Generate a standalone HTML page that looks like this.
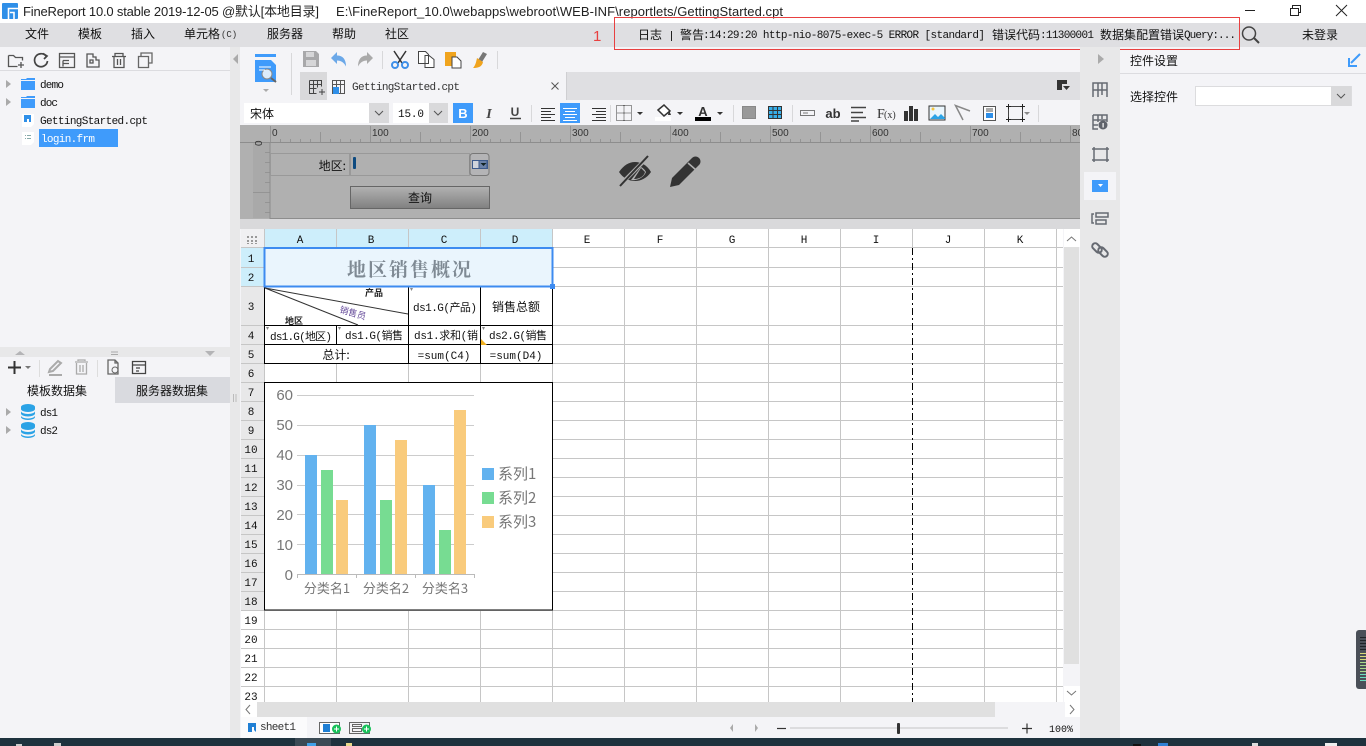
<!DOCTYPE html>
<html lang="zh">
<head>
<meta charset="utf-8">
<title>FineReport</title>
<style>
html,body{margin:0;padding:0;background:#f4f4f7;overflow:hidden;width:1366px;height:746px}
svg{display:block}
text{font-family:"Liberation Sans","WenQuanYi Zen Hei","Noto Sans CJK SC",sans-serif;font-size:12px;fill:#111}
.m{font-family:"Liberation Mono","WenQuanYi Zen Hei",monospace;font-size:11px}
.c{font-family:"WenQuanYi Zen Hei","Noto Sans CJK SC",sans-serif;font-size:12px}
.t{font-size:13px;fill:#222}
.s{fill:none;stroke:#555;stroke-width:1.3}
.g{fill:none;stroke:#666a72;stroke-width:2}
.mid{text-anchor:middle}
.end{text-anchor:end}
.ax{fill:#777;font-size:15px}
.cat{fill:#777;font-size:13px;font-family:"Noto Sans CJK SC","Liberation Sans",sans-serif}
.leg{fill:#777;font-size:15px;font-family:"Noto Sans CJK SC","Liberation Sans",sans-serif}
.r{font-family:"Liberation Mono",monospace;font-size:11px;text-anchor:middle}
</style>
</head>
<body>
<svg width="1366" height="746" viewBox="0 0 1366 746" xmlns="http://www.w3.org/2000/svg">
<defs>
<pattern id="rt" patternUnits="userSpaceOnUse" x="270" y="126" width="100" height="17">
<path d="M.5 0V17M10.5 13V17M20.5 13V17M30.5 13V17M40.5 13V17M50.5 6V17M60.5 13V17M70.5 13V17M80.5 13V17M90.5 13V17" stroke="#949494" fill="none"/>
</pattern>
<pattern id="rl" patternUnits="userSpaceOnUse" x="253" y="143" width="17" height="100">
<path d="M12 9.500H17M12 19.500H17M12 29.500H17M12 39.500H17M0 49.500H17M12 59.500H17M12 69.500H17M12 79.500H17M12 89.500H17" stroke="#949494" fill="none"/>
</pattern>
<linearGradient id="btn" x1="0" y1="0" x2="0" y2="1"><stop offset="0" stop-color="#b2b2b2"/><stop offset="1" stop-color="#808080"/></linearGradient>
</defs>

<!-- base -->
<rect width="1366" height="746" fill="#f4f4f7"/>
<rect width="1366" height="23" fill="#fff"/>
<rect y="23" width="1366" height="24" fill="#dfdfe2"/>

<!-- title bar -->
<rect x="2" y="3" width="16" height="16" rx="1" fill="#2f8fe8"/>
<path d="M8.500 19V8.500H18M10 12.500H14V19" stroke="#fff" stroke-width="1.600" fill="none"/>
<text x="23" y="16" class="t" textLength="296">FineReport 10.0 stable 2019-12-05 @默认[本地目录]</text>
<text x="336" y="16" class="t" textLength="447">E:\FineReport_10.0\webapps\webroot\WEB-INF\reportlets/GettingStarted.cpt</text>
<path d="M1245 10.500H1255" stroke="#222" fill="none"/>
<path d="M1290.500 8.500h8v7h-8zM1292.500 8V5.500h8v7h-2" stroke="#222" fill="none"/>
<path d="M1336 5L1347 16M1347 5L1336 16" stroke="#222" fill="none"/>

<!-- menu -->
<text x="25" y="38" class="c">文件</text>
<text x="78" y="38" class="c">模板</text>
<text x="131" y="38" class="c">插入</text>
<text x="184" y="38" class="c">单元格</text>
<text x="221" y="37" class="m" style="font-size:9px;fill:#333">(C)</text>
<text x="267" y="38" class="c">服务器</text>
<text x="332" y="38" class="c">帮助</text>
<text x="385" y="38" class="c">社区</text>
<text x="593" y="41" style="font-size:15px;fill:#e84040">1</text>

<!-- log -->
<text x="638" y="39" class="c">日志</text>
<path d="M671.500 31V41" stroke="#222"/>
<text x="680" y="39" class="c">警告</text>
<text x="703" y="38" class="m" textLength="282">:14:29:20 http-nio-8075-exec-5 ERROR [standard]</text>
<text x="992" y="39" class="c">错误代码</text>
<text x="1040" y="38" class="m" textLength="54">:11300001</text>
<text x="1100" y="39" class="c">数据集配置错误</text>
<text x="1184" y="38" class="m" textLength="52">Query:...</text>
<circle cx="1249" cy="33.500" r="6.500" fill="none" stroke="#444" stroke-width="1.500"/>
<path d="M1254 38L1259 43" stroke="#444" stroke-width="2"/>
<text x="1302" y="39" class="c">未登录</text>
<rect x="614.500" y="17.500" width="625" height="32" fill="none" stroke="#e84040"/>

<!-- left panel toolbar -->
<path d="M8.500 55.500h5l2 2h7v3M8.500 55.500v11h9M18 65h6M21 62v6" class="s"/>
<path d="M46 56a6.500 6.500 0 1 0 1.500 5M43 53.500l4 2.500-3 3" class="s" style="stroke:#444;stroke-width:1.700"/>
<path d="M59.500 53.500h15v14h-15zM59.500 57h15M63 60.500h6M63 63.500h6M63 60.500v6" class="s"/>
<path d="M87 54h6v3h3v3h3v7h-12zM90 60h3v3h-3z" class="s"/>
<path d="M112 56.500h14M115 56v-2.500h8V56M114 57v10.500h10V57M117.500 59v6M120.500 59v6" class="s"/>
<path d="M138.500 56.500h10v11h-10zM141 56v-3h11v10h-3" class="s" style="stroke:#666"/>
<rect y="70" width="230" height="1" fill="#dcdce0"/>

<!-- left tree -->
<path d="M6 80l5 4-5 4zM6 98l5 4-5 4z" fill="#aaa"/>
<path d="M21 79h5l1-1h8v2h-14zM21 81h14v9h-14zM21 97h5l1-1h8v2h-14zM21 99h14v9h-14z" fill="#3f9bfb"/>
<text x="40" y="88" class="m" textLength="24">demo</text>
<text x="40" y="106" class="m" textLength="18">doc</text>
<path d="M22 114h12v10l-3 3h-9z" fill="#fff"/>
<path d="M24 115h7v7h-2v-3h-2v3h-3z" fill="#2f8fe8"/>
<text x="40" y="124" class="m" textLength="108">GettingStarted.cpt</text>
<path d="M22 132h12v10l-3 3h-9z" fill="#fff"/>
<path d="M25 135.500h1M27 135.500h4M25 138.500h1M27 138.500h4" stroke="#8aa"/>
<rect x="39" y="129" width="79" height="18" fill="#3f9bfb"/>
<text x="41" y="142" class="m" textLength="54" style="fill:#fff">login.frm</text>

<!-- left split -->
<rect y="347" width="230" height="10" fill="#e8e8e9"/>
<path d="M15 355l5-4 5 4zM205 351h10l-5 5z" fill="#b4b4b6"/>
<path d="M111 352h7M111 354.500h7" stroke="#aaa"/>
<path d="M8 367.500h13M14.500 361v13" stroke="#333" stroke-width="2"/>
<path d="M25 366h6l-3 3z" fill="#777"/>
<path d="M39.500 360v17M97.500 360v17" stroke="#ddd"/>
<path d="M49 372l1-3 8-8 3 2-8 8zM49 375h13" class="s" style="stroke:#aaa;stroke-width:2"/>
<path d="M75 362h13M78 361v-1h7v1M76.500 363v11h10v-11M80 365v7M83 365v7" class="s" style="stroke:#aaa"/>
<path d="M108 360h7l3 3v11h-10zM115 360v3h3" class="s" style="stroke:#666"/>
<circle cx="115" cy="370" r="3" fill="none" stroke="#666"/>
<path d="M132.500 361.500h13v12h-13zM132.500 365h13M136 368h4M136 371h3" class="s" style="stroke:#444"/>
<rect y="377" width="115" height="26" fill="#f4f4f7"/>
<rect x="115" y="377" width="115" height="26" fill="#d9dadf"/>
<text x="57" y="395" class="c mid">模板数据集</text>
<text x="172" y="395" class="c mid">服务器数据集</text>
<path d="M6 408l5 4-5 4zM6 426l5 4-5 4z" fill="#aaa"/>
<g fill="#2ba3e6">
<path d="M21 407a7 3 0 0 1 14 0v2a7 3 0 0 1-14 0zM21 411a7 3 0 0 0 14 0v2.500a7 3 0 0 1-14 0zM21 415.500a7 3 0 0 0 14 0v1.500a7 3 0 0 1-14 0z"/>
<path d="M21 425a7 3 0 0 1 14 0v2a7 3 0 0 1-14 0zM21 429a7 3 0 0 0 14 0v2.500a7 3 0 0 1-14 0zM21 433.500a7 3 0 0 0 14 0v1.500a7 3 0 0 1-14 0z"/>
</g>
<text x="40" y="416" class="m" textLength="18">ds1</text>
<text x="40" y="434" class="m" textLength="18">ds2</text>

<!-- vertical splitter -->
<rect x="230" y="47" width="10" height="691" fill="#e8e8e9"/>
<path d="M238 54l-5 5 5 5z" fill="#aaa"/>
<path d="M233.500 394v8M236 394v8" stroke="#bbb"/>

<!-- tab row (starts at x=300) -->
<rect x="300" y="72" width="780" height="28" fill="#dfdfe2"/>
<rect x="300" y="72" width="266" height="28" fill="#f4f4f7"/>
<rect x="300" y="72" width="27" height="28" fill="#d9d9db"/>
<rect x="566" y="72" width="1" height="28" fill="#cfcfd2"/>
<path d="M309.500 80.500h12v6M309.500 80.500v13h7M309.500 84.500h12M309.500 88.500h7M313.500 80.500v13M317.500 80.500v7M319 92h6M322 89v6" fill="none" stroke="#444"/>
<path d="M332.500 80.500h12v13h-12zM332.500 84.500h12M336.500 81v13M340.500 81v13" fill="none" stroke="#555"/>
<rect x="333" y="87" width="6" height="7" fill="#2f8fe8"/>
<text x="352" y="90" class="m" textLength="108" style="fill:#333">GettingStarted.cpt</text>
<path d="M551.500 82.500l7 7M558.500 82.500l-7 7" stroke="#555" fill="none"/>
<path d="M1057 80h10v4h-5v6h-5z" fill="#333"/>
<path d="M1063 86h7l-3.500 4z" fill="#333"/>

<!-- toolbar row 1 -->
<rect x="255" y="54" width="21" height="3" fill="#3f9bfb"/>
<path d="M255 60h16l5 5v17h-21z" fill="#3f9bfb"/>
<circle cx="267" cy="74" r="5" fill="#dcecfb" stroke="#888"/>
<path d="M259 67h12M259 70h6" stroke="#fff"/>
<path d="M271 78l5 4" stroke="#666" stroke-width="2"/>
<path d="M263 89h6l-3 3z" fill="#aaa"/>
<path d="M291.500 53V95" stroke="#d8d8da"/>
<path d="M303 51h13l3 3v13h-16z" fill="#a8a8aa"/>
<path d="M306 52h8v5h-8zM306 60h10v6h-10z" fill="#d6d6d8"/>
<path d="M331 58l6-6v3.500c6 0 9 4 9 11-2-4-5-6-9-6v3.500z" fill="#6ba8e8"/>
<path d="M373 58l-6-6v3.500c-6 0-9 4-9 11 2-4 5-6 9-6v3.500z" fill="#aaa"/>
<path d="M382.500 51V69M497.500 51V69" stroke="#d8d8da"/>
<path d="M394 51l8 12M406 51l-8 12" stroke="#333" stroke-width="1.500"/>
<circle cx="395" cy="65" r="3" fill="none" stroke="#3f8fe8" stroke-width="2"/>
<circle cx="405" cy="65" r="3" fill="none" stroke="#3f8fe8" stroke-width="2"/>
<path d="M418.500 51.500h7l3 3v9h-10zM425 55.500h4l5 4v8h-9z" fill="#fff" stroke="#444"/>
<path d="M445 52h11v14h-11z" fill="#f0a41e"/>
<path d="M452 57h5l4 4v7h-9z" fill="#fff" stroke="#444"/>
<path d="M483 52l4 2-5 8-4-2z" fill="#777"/>
<path d="M477 58l6 4c-1 5-5 6-10 6 2-2 3-5 4-10z" fill="#f0a41e"/>

<!-- format row -->
<rect x="240" y="100" width="840" height="25" fill="#f4f4f7"/>
<rect x="244" y="103" width="125" height="20" fill="#fff"/>
<rect x="369" y="103" width="20" height="20" fill="#d9d9db"/>
<path d="M375 111l4 4 4-4" fill="none" stroke="#555"/>
<text x="250" y="118" class="c">宋体</text>
<rect x="393" y="103" width="36" height="20" fill="#fff"/>
<rect x="429" y="103" width="19" height="20" fill="#d9d9db"/>
<path d="M434 111l4 4 4-4" fill="none" stroke="#555"/>
<text x="398" y="117" class="m" textLength="26">15.0</text>
<rect x="453" y="103" width="20" height="20" fill="#3f9bfb"/>
<text x="463" y="118" class="mid" style="font-weight:bold;font-size:13px;fill:#fff">B</text>
<text x="489" y="118" class="mid" style="font-family:'Liberation Serif',serif;font-weight:bold;font-style:italic;font-size:14px;fill:#444">I</text>
<text x="515" y="116" class="mid" style="font-weight:bold;font-size:12px;fill:#444">U</text>
<path d="M510 118.500h11" stroke="#444" stroke-width="1.500"/>
<path d="M531.500 105V122M733.500 105V122M792.500 105V122M610.500 105V122M1038.500 105V122" stroke="#d8d8da"/>
<path d="M541 108.500h14M541 111.500h10M541 114.500h14M541 117.500h10M541 120.500h14" stroke="#333" fill="none"/>
<rect x="560" y="103" width="20" height="20" fill="#3f9bfb"/>
<path d="M563 108.500h14M565 111.500h10M563 114.500h14M565 117.500h10M563 120.500h14" stroke="#fff" fill="none"/>
<path d="M592 108.500h14M596 111.500h10M592 114.500h14M596 117.500h10M592 120.500h14" stroke="#333" fill="none"/>
<path d="M616.500 105.500h15v15h-15zM624 105.500v15M616.500 113h15" fill="none" stroke="#333" stroke-dasharray="1 1"/>
<path d="M637 112h6l-3 3z" fill="#333"/>
<path d="M658 110l6-5 6 6-6 5z" fill="#fff" stroke="#333" stroke-width="1.500"/>
<path d="M669 110l2 5h-3z" fill="#333"/>
<rect x="655" y="117" width="16" height="4" fill="#fff"/>
<path d="M677 112h6l-3 3z" fill="#333"/>
<text x="703" y="116" class="mid" style="font-weight:bold;font-size:13px;fill:#333">A</text>
<rect x="695" y="117" width="16" height="4" fill="#000"/>
<path d="M717 112h6l-3 3z" fill="#333"/>
<rect x="742" y="106" width="14" height="13" fill="#999"/>
<path d="M742.500 106.500h13v12h-13z" fill="none" stroke="#888"/>
<rect x="768" y="106" width="14" height="13" fill="#37aee8"/>
<path d="M768.500 106.500h13v12h-13zM768.500 110.500h13M768.500 114.500h13M773 106v13M777.500 106v13" fill="none" stroke="#333"/>
<path d="M800.500 110.500h14v5h-14zM803 113h5" fill="none" stroke="#777"/>
<text x="833" y="118" class="mid" style="font-weight:bold;font-size:13px;fill:#333">ab</text>
<path d="M851 107.500h15M851 112.500h12M851 117.500h15M851 121h8" stroke="#444" stroke-width="1.500" fill="none"/>
<text x="877" y="118" style="font-family:'Liberation Serif',serif;font-size:14px;fill:#333">F</text>
<text x="884" y="118" style="font-family:'Liberation Serif',serif;font-size:10px;fill:#333">(x)</text>
<path d="M904 111h4v10h-4zM909 106h4v15h-4zM914 109h4v12h-4z" fill="#333"/>
<rect x="929" y="106" width="16" height="14" fill="#eaf6fd" stroke="#333"/>
<path d="M930 119l5-5 3 3 3-3 4 4v1z" fill="#2ba3e6"/>
<circle cx="933" cy="109" r="1.500" fill="#f5c542"/>
<path d="M970 111L955.500 105.500L963 120" fill="none" stroke="#888" stroke-width="1.500"/>
<rect x="983.500" y="106.500" width="12" height="14" fill="#fff" stroke="#555"/>
<path d="M986 109h7M986 111h7" stroke="#555"/>
<rect x="986" y="113" width="7" height="5" fill="#2f8fe8"/>
<rect x="1008.500" y="106.500" width="14" height="13" fill="none" stroke="#444"/>
<path d="M1006 106.500h5M1020 106.500h5M1006 119.500h5M1020 119.500h5M1008.500 104v5M1022.500 104v5M1008.500 117v5M1022.500 117v5" stroke="#222"/>
<path d="M1024 112h6l-3 3z" fill="#888"/>

<!-- form area -->
<rect x="240" y="125" width="840" height="94" fill="#b0b0b0"/>
<rect x="253" y="143" width="17" height="75" fill="#a9a9a9"/>
<rect x="270" y="126" width="810" height="17" fill="url(#rt)"/>
<rect x="253" y="143" width="17" height="75" fill="url(#rl)"/>
<path d="M240 142.500H1080" stroke="#8d8d8d"/>
<path d="M270 142V218.500H1080" stroke="#8d8d8d" fill="none"/>
<text x="272" y="136" style="font-size:10px;fill:#333">0</text>
<text x="372" y="136" style="font-size:10px;fill:#333">100</text>
<text x="472" y="136" style="font-size:10px;fill:#333">200</text>
<text x="572" y="136" style="font-size:10px;fill:#333">300</text>
<text x="672" y="136" style="font-size:10px;fill:#333">400</text>
<text x="772" y="136" style="font-size:10px;fill:#333">500</text>
<text x="872" y="136" style="font-size:10px;fill:#333">600</text>
<text x="972" y="136" style="font-size:10px;fill:#333">700</text>
<text x="1072" y="136" style="font-size:10px;fill:#333">800</text>
<text transform="translate(262,146) rotate(-90)" style="font-size:10px;fill:#333">0</text>
<rect x="270.500" y="153.500" width="79" height="22" fill="none" stroke="#999"/>
<text x="346" y="170" class="c end">地区:</text>
<rect x="350.500" y="153.500" width="119" height="22" fill="none" stroke="#999"/>
<rect x="353" y="157" width="3" height="12" rx="1" fill="#0d4a80"/>
<rect x="470" y="153.500" width="19" height="22" rx="3" fill="#b4b4b6" stroke="#777"/>
<rect x="472.500" y="160.500" width="15" height="8" fill="#d0d4dc" stroke="#3c5a8c"/>
<rect x="479" y="160.500" width="8" height="8" fill="#6b82a8" stroke="#3c5a8c"/>
<path d="M480.500 163h6l-3 3z" fill="#122"/>
<rect x="350.500" y="186.500" width="139" height="22" fill="url(#btn)" stroke="#666"/>
<text x="420" y="202" class="c mid">查询</text>
<!-- eye -->
<path d="M619 172c5-7 10-10 16-10 6 0 12 3 16 10-4 6-10 9-16 9-6 0-12-3-16-9z" fill="#333"/>
<path d="M631 180c7 1 13-3 15-8-1-2-3-4-5-5z" fill="#b0b0b0"/>
<path d="M634 179c6 0 10-3 11-7l-4-4" fill="#333"/>
<path d="M620 185L648 157" stroke="#b0b0b0" stroke-width="4"/>
<path d="M620 186L648 156" stroke="#333" stroke-width="2"/>
<!-- pencil -->
<path d="M670 187l2-9 20-20c2-2 5-2 7 0 2 2 2 5 0 7l-20 20z" fill="#333"/>
<path d="M688 163l8 7" stroke="#b0b0b0" stroke-width="1.500"/>

<!-- strip -->
<rect x="240" y="219" width="840" height="10" fill="#d9d9db"/>

<!-- sheet -->
<rect x="241" y="229" width="824" height="473" fill="#fff"/>
<rect x="241" y="229" width="23" height="18" fill="#f0f0f2"/>
<path d="M247 236h2v2h-2zM251 236h2v2h-2zM255 236h2v2h-2zM247 240h2v2h-2zM251 240h2v2h-2zM255 240h2v2h-2zM247 244h2v-1h-2zM251 244h2v-1h-2zM255 244h2v-1h-2z" fill="#999"/>
<rect x="265" y="229" width="288" height="18" fill="#cdeefb"/>
<rect x="241" y="248" width="23" height="38" fill="#cdeefb"/>
<rect x="241" y="287" width="23" height="323" fill="#e8e8e9"/>
<g shape-rendering="crispEdges" fill="none" stroke="#c6c6c6">
<path d="M264.500 229V702M336.500 229V702M408.500 229V702M480.500 229V702M552.500 229V702M624.500 229V702M696.500 229V702M768.500 229V702M840.500 229V702M984.500 229V702M1056.500 229V702"/>
<path d="M241 247.500H1063M241 267.500H1063M241 286.500H1063M241 325.500H1063M241 344.500H1063M241 363.500H1063M241 382.500H1063M241 401.500H1063M241 420.500H1063M241 439.500H1063M241 458.500H1063M241 477.500H1063M241 496.500H1063M241 515.500H1063M241 534.500H1063M241 553.500H1063M241 572.500H1063M241 591.500H1063M241 610.500H1063M241 629.500H1063M241 648.500H1063M241 667.500H1063M241 686.500H1063"/>
<path d="M912.500 229V247"/>
</g>
<path d="M912.500 248V702" stroke="#000" stroke-dasharray="7 3 2 3" shape-rendering="crispEdges"/>

<!-- headers -->
<text x="300" y="243" class="m mid">A</text><text x="371" y="243" class="m mid">B</text><text x="444" y="243" class="m mid">C</text><text x="515" y="243" class="m mid">D</text><text x="587" y="243" class="m mid">E</text><text x="660" y="243" class="m mid">F</text><text x="732" y="243" class="m mid">G</text><text x="804" y="243" class="m mid">H</text><text x="876" y="243" class="m mid">I</text><text x="948" y="243" class="m mid">J</text><text x="1020" y="243" class="m mid">K</text>
<text x="251" y="262" class="r">1</text>
<text x="251" y="281" class="r">2</text>
<text x="251" y="310" class="r">3</text>
<text x="251" y="339" class="r">4</text>
<text x="251" y="358" class="r">5</text>
<text x="251" y="377" class="r">6</text>
<text x="251" y="396" class="r">7</text>
<text x="251" y="415" class="r">8</text>
<text x="251" y="434" class="r">9</text>
<text x="251" y="453" class="r">10</text>
<text x="251" y="472" class="r">11</text>
<text x="251" y="491" class="r">12</text>
<text x="251" y="510" class="r">13</text>
<text x="251" y="529" class="r">14</text>
<text x="251" y="548" class="r">15</text>
<text x="251" y="567" class="r">16</text>
<text x="251" y="586" class="r">17</text>
<text x="251" y="605" class="r">18</text>
<text x="251" y="624" class="r">19</text>
<text x="251" y="643" class="r">20</text>
<text x="251" y="662" class="r">21</text>
<text x="251" y="681" class="r">22</text>
<text x="251" y="700" class="r">23</text>

<!-- report cells -->
<rect x="265" y="249" width="287" height="37" fill="#eaf5fd"/>
<text x="410" y="276" class="mid" style="font-family:'Noto Serif CJK SC',serif;font-weight:700;font-size:19px;letter-spacing:2px;fill:#7f8a94">地区销售概况</text>
<rect x="265" y="287" width="287" height="76" fill="#fff"/>
<g shape-rendering="crispEdges" fill="none" stroke="#000">
<path d="M264.500 287V363.500H552.500V287M264.500 325.500H552.500M264.500 344.500H552.500M336.500 325V344M408.500 287V363M480.500 287V363"/>
</g>
<path d="M265 288L408 314M265 288L358 325" stroke="#333" fill="none" stroke-width="1"/>
<text x="374" y="296" class="mid" style="font-size:9px;font-weight:bold;fill:#222">产品</text>
<text transform="translate(352,316) rotate(16)" class="mid" style="font-size:9px;fill:#654a9a">销售员</text>
<text x="294" y="324" class="mid" style="font-size:9px;font-weight:bold;fill:#222">地区</text>
<path d="M266 327h3l-1.500 3zM338 327h3l-1.500 3zM410 288h3l-1.500 3zM482 327h3l-1.500 3z" fill="#888"/>
<path d="M481 345v-6l6 6z" fill="#f0b020"/>
<text x="270" y="340" class="m" textLength="62">ds1.G(地区)</text>
<text x="345" y="339" class="m" textLength="58">ds1.G(销售</text>
<text x="414" y="339" class="m" textLength="64">ds1.求和(销</text>
<text x="489" y="339" class="m" textLength="58">ds2.G(销售</text>
<text x="413" y="311" class="m" textLength="64">ds1.G(产品)</text>
<text x="516" y="311" class="c mid">销售总额</text>
<text x="336" y="359" class="c mid">总计:</text>
<text x="444" y="359" class="m mid">=sum(C4)</text>
<text x="516" y="359" class="m mid">=sum(D4)</text>
<rect x="264.500" y="248" width="288" height="38.500" fill="none" stroke="#3d8bf0" stroke-width="2"/>
<rect x="550" y="284" width="5" height="5" fill="#3d8bf0"/>

<!-- chart -->
<rect x="264.500" y="382.500" width="288" height="227.500" fill="#fff" stroke="#000" shape-rendering="crispEdges"/>
<g shape-rendering="crispEdges" stroke="#ccc">
<path d="M297 395.500H474M297 425.500H474M297 455.500H474M297 485.500H474M297 514.500H474M297 544.500H474" fill="none"/>
<path d="M297 574.500H474M297.500 574V578M356.500 574V578M415.500 574V578M474.500 574V578" fill="none" stroke="#bbb"/>
</g>
<text x="293" y="400" class="ax end">60</text>
<text x="293" y="430" class="ax end">50</text>
<text x="293" y="460" class="ax end">40</text>
<text x="293" y="490" class="ax end">30</text>
<text x="293" y="520" class="ax end">20</text>
<text x="293" y="550" class="ax end">10</text>
<text x="293" y="580" class="ax end">0</text>
<g fill="#62b2ef">
<rect x="305" y="455" width="12" height="119"/><rect x="364" y="425" width="12" height="149"/><rect x="423" y="485" width="12" height="89"/>
<rect x="482" y="468" width="12" height="12"/>
</g>
<g fill="#77dc92">
<rect x="321" y="470" width="12" height="104"/><rect x="380" y="500" width="12" height="74"/><rect x="439" y="530" width="12" height="44"/>
<rect x="482" y="492" width="12" height="12"/>
</g>
<g fill="#f9cb7c">
<rect x="336" y="500" width="12" height="74"/><rect x="395" y="440" width="12" height="134"/><rect x="454" y="410" width="12" height="164"/>
<rect x="482" y="516" width="12" height="12"/>
</g>
<text x="327" y="593" class="cat mid">分类名1</text>
<text x="386" y="593" class="cat mid">分类名2</text>
<text x="445" y="593" class="cat mid">分类名3</text>
<text x="498" y="479" class="leg">系列1</text>
<text x="498" y="503" class="leg">系列2</text>
<text x="498" y="527" class="leg">系列3</text>

<!-- v scrollbar -->
<rect x="1063" y="229" width="17" height="473" fill="#f4f4f7"/>
<rect x="1064" y="247" width="15" height="417" fill="#e0e0e0"/>
<rect x="1064" y="229" width="16" height="18" fill="#fff"/>
<rect x="1064" y="686" width="16" height="16" fill="#fff"/>
<path d="M1067 241l4.500-4 4.500 4M1067 691l4.500 4 4.500-4" fill="none" stroke="#777"/>
<!-- h scrollbar -->
<rect x="241" y="702" width="839" height="15" fill="#f4f4f7"/>
<rect x="257" y="702" width="738" height="15" fill="#e0e0e0"/>
<rect x="241" y="702" width="16" height="15" fill="#fff"/>
<rect x="1065" y="702" width="15" height="15" fill="#fff"/>
<path d="M250 705l-4 4.500 4 4.500M1070 705l4 4.500-4 4.500" fill="none" stroke="#777"/>

<!-- sheet tabs -->
<rect x="240" y="717" width="840" height="21" fill="#f4f4f7"/>
<rect x="241" y="717" width="66" height="21" fill="#fbfbfc"/>
<path d="M248 723h8v9l-2-2v-3h-2v5h-4z" fill="#1f7fd4"/>
<text x="260" y="730" class="m" textLength="36" style="fill:#333">sheet1</text>
<path d="M319.500 722.500h20v11h-20z" fill="#fff" stroke="#666"/>
<rect x="323" y="724" width="7" height="8" fill="#1f7fd4"/>
<circle cx="336.500" cy="729" r="4.500" fill="#18c15a"/>
<path d="M334 729h5M336.500 726.500v5" stroke="#fff"/>
<path d="M349.500 722.500h20v11h-20zM352.500 724.500h9v2h-9zM352.500 728.500h9v3h-9z" fill="none" stroke="#666"/>
<circle cx="366.500" cy="729" r="4.500" fill="#18c15a"/>
<path d="M364 729h5M366.500 726.500v5" stroke="#fff"/>
<path d="M733 724l-3 4 3 4zM755 724l3 4-3 4z" fill="#aaa"/>
<path d="M777 728.500h9" stroke="#333" stroke-width="1.200"/>
<rect x="790" y="727" width="218" height="2" fill="#dcdcde"/>
<rect x="897" y="723" width="3" height="11" rx="1" fill="#333"/>
<path d="M1022 728.500h10M1027 723.500v10" stroke="#333" stroke-width="1.200"/>
<text x="1049" y="732" class="m" textLength="24" style="font-size:10px">100%</text>

<!-- right strip -->
<rect x="1080" y="47" width="40" height="691" fill="#e8e8e9"/>
<path d="M1098 54l6 5-6 5z" fill="#aaa"/>
<path d="M1093 83h14v7h-14zM1093 90v7M1107 90v7M1098 83v14M1102 83v12" class="g" style="stroke-width:1.500"/>
<path d="M1093 115h14v7M1093 115v14h5M1093 120h14M1093 125h5M1098 115v7M1102 115v4" class="g" style="stroke-width:1.500"/>
<circle cx="1103" cy="125" r="4.500" fill="#5f636b"/>
<rect x="1102.500" y="123" width="1.200" height="4.500" fill="#fff"/>
<path d="M1094 149h13v11h-13zM1092 149h17M1092 160h17M1094 147v15M1107 147v15" class="g" style="stroke-width:1.500"/>
<rect x="1084" y="172" width="32" height="28" fill="#f4f4f7"/>
<rect x="1092" y="180" width="16" height="12" fill="#3f9bfb"/>
<path d="M1098 184h5l-2.500 3z" fill="#fff"/>
<path d="M1096 213h12v4h-12zM1096 220h10v4h-10zM1094 214h-2v9h2" fill="none" stroke="#666a72" stroke-width="1.500"/>
<rect x="1091.500" y="245" width="11" height="6" rx="3" transform="rotate(45 1097 248)" fill="none" stroke="#666a72" stroke-width="2"/>
<rect x="1097.500" y="249" width="11" height="6" rx="3" transform="rotate(45 1103 252)" fill="none" stroke="#666a72" stroke-width="2"/>

<!-- right panel -->
<text x="1130" y="65" class="c">控件设置</text>
<rect x="1120" y="73" width="246" height="1" fill="#dcdce0"/>
<path d="M1360 54l-9 9M1349 58v8h8" fill="none" stroke="#3f9bfb" stroke-width="2"/>
<text x="1130" y="101" class="c">选择控件</text>
<rect x="1195.500" y="86.500" width="156" height="19" fill="#fff" stroke="#dcdcde"/>
<rect x="1331" y="86" width="20" height="20" fill="#d9d9db"/>
<path d="M1337 94l4 4 4-4" fill="none" stroke="#555"/>

<!-- floating widget -->
<rect x="1356" y="630" width="12" height="59" rx="3" fill="#4a4f58"/>
<path d="M1360 637.500h6M1360 640.500h6M1360 643.500h6M1360 646.500h6M1360 649.500h6" stroke="#1f2227"/>
<path d="M1360 653.500h6M1360 656.500h6M1360 659.500h6" stroke="#d8d87a"/>
<path d="M1360 662.500h6M1360 665.500h6M1360 668.500h6M1360 671.500h6" stroke="#a8d88a"/>
<path d="M1360 674.500h6M1360 677.500h6M1360 680.500h6" stroke="#6adcc0"/>

<!-- taskbar -->
<rect y="738" width="1366" height="8" fill="#1e323e"/>
<rect x="295" y="738" width="36" height="8" fill="#3b4a55"/>
<rect x="307" y="743" width="9" height="3" fill="#3fa0e8"/>
<rect x="346" y="743" width="6" height="3" fill="#e8d88a"/>
<rect x="16" y="744" width="6" height="2" fill="#ccc"/>
<rect x="54" y="743" width="7" height="3" fill="#ccc"/>
<rect x="1133" y="744" width="8" height="2" fill="#111"/>
<rect x="1158" y="743" width="10" height="3" fill="#2d7fd4"/>
<rect x="1252" y="743" width="6" height="3" fill="#ddd"/>
<rect x="1325" y="743" width="12" height="3" fill="#eee"/>
</svg>
</body>
</html>
